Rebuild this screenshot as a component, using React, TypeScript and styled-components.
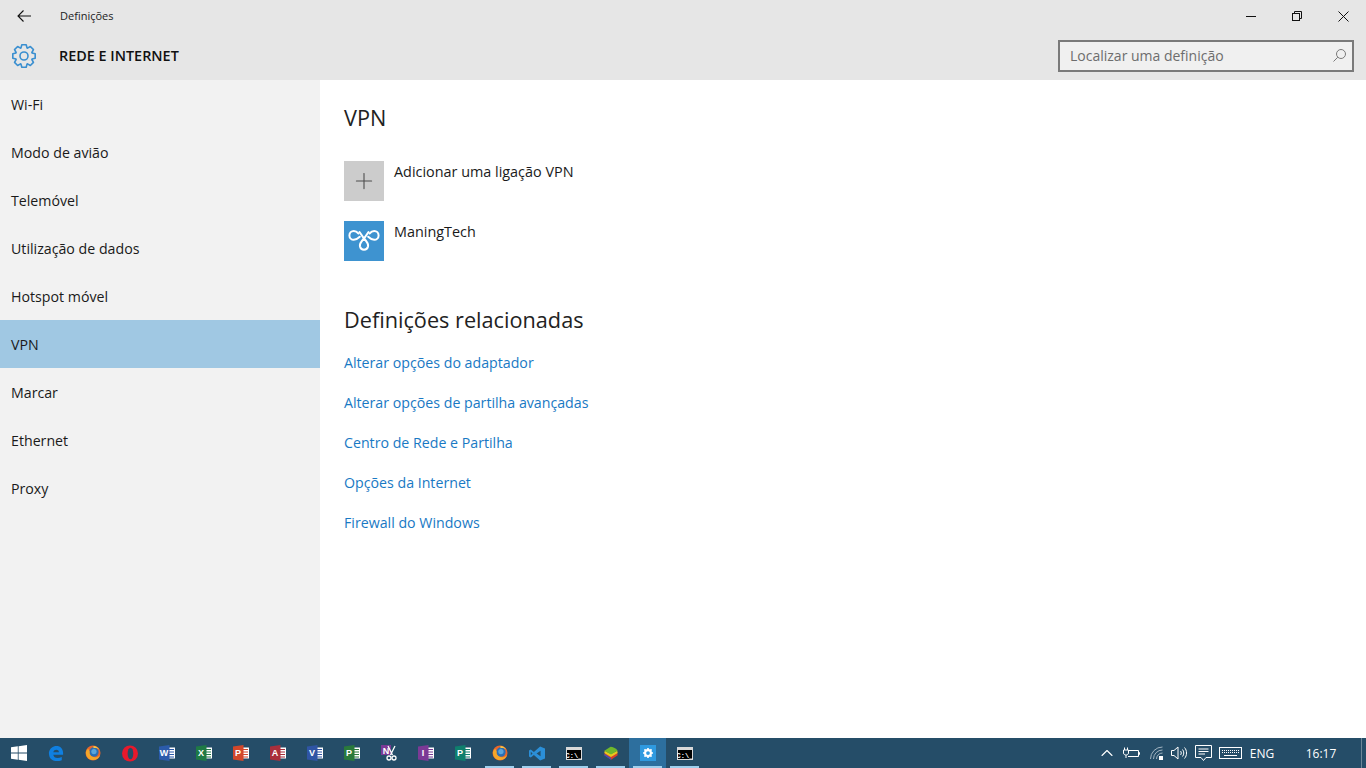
import React from 'react';
import styled, { createGlobalStyle } from 'styled-components';
import { ChevronUp, Plus } from 'lucide-react';

const GlobalStyle = createGlobalStyle`
  html, body {
    margin: 0;
    padding: 0;
    height: 100%;
    overflow: hidden;
    background: #fff;
    font-family: "Open Sans", "Noto Sans", "Liberation Sans", sans-serif;
    color: #000;
  }
  #root { height: 100%; }
`;

const Page = styled.div`
  width: 1366px;
  height: 768px;
  display: flex;
  flex-direction: column;
`;

const Header = styled.header`
  height: 80px;
  flex: none;
  background: #e6e6e6;
  display: flex;
  flex-direction: column;
`;

const TitleBar = styled.div`
  height: 32px;
  display: flex;
  align-items: center;
`;

const BackButton = styled.div`
  width: 48px;
  height: 32px;
  display: flex;
  align-items: center;
  justify-content: center;
`;

const TitleText = styled.span`
  margin-left: 12px;
  padding-bottom: 1px;
  font-size: 11px;
  line-height: 14px;
  color: #222;
  flex: 1;
`;

const WinButton = styled.div`
  width: 46px;
  height: 32px;
  display: flex;
  align-items: center;
  justify-content: center;
`;

const HeadRow = styled.div`
  flex: 1;
  display: flex;
  align-items: center;
  padding: 0 12px;
`;

const AppTitle = styled.h1`
  margin: 0 0 0 23px;
  font-size: 14.4px;
  font-weight: 600;
  flex: 1;
  line-height: 20px;
  color: #111;
`;

const SearchBox = styled.div`
  width: 296px;
  height: 32px;
  box-sizing: border-box;
  border: 2px solid #7a7a7a;
  background: #f0f0f0;
  display: flex;
  align-items: center;
  justify-content: space-between;
  padding: 0 5px 2px 10px;
  font-size: 14px;
  color: #6d6d6d;
`;

const Body = styled.div`
  flex: 1;
  display: flex;
  min-height: 0;
`;

const Sidebar = styled.nav`
  width: 320px;
  flex: none;
  background: #f2f2f2;
`;

const NavItem = styled.div<{ $active?: boolean }>`
  height: 48px;
  display: flex;
  align-items: center;
  padding-left: 11px;
  font-size: 14.2px;
  color: #1a1a1a;
  background: ${(p) => (p.$active ? '#a0c8e3' : 'transparent')};
`;

const Main = styled.main`
  flex: 1;
  background: #fff;
  padding: 23px 24px 0;
`;

const SectionTitle = styled.h2`
  margin: 0;
  font-size: 21.7px;
  font-weight: 400;
  line-height: 30px;
  color: #222;
`;

const Tiles = styled.div`
  margin-top: 28px;
  display: flex;
  flex-direction: column;
  gap: 20px;
`;

const TileRow = styled.div`
  display: flex;
  gap: 10px;
  height: 40px;
`;

const Tile = styled.div<{ $bg: string }>`
  width: 40px;
  height: 40px;
  background: ${(p) => p.$bg};
  display: flex;
  align-items: center;
  justify-content: center;
  color: #4c4c4c;
`;

const TileLabel = styled.span`
  padding-top: 1px;
  font-size: 14.4px;
  line-height: 20px;
  color: #1a1a1a;
`;

const Related = styled.div`
  margin-top: 44px;
`;

const Links = styled.div`
  margin-top: 7px;
  display: flex;
  flex-direction: column;
`;

const LinkItem = styled.a`
  height: 40px;
  display: flex;
  align-items: center;
  font-size: 14.2px;
  color: #1979c4;
`;

const Taskbar = styled.footer`
  height: 30px;
  flex: none;
  background: #254d68;
  display: flex;
  align-items: stretch;
`;

const Apps = styled.div`
  flex: 1;
  display: flex;
`;

const AppButton = styled.div<{ $open?: boolean; $active?: boolean }>`
  position: relative;
  width: 37px;
  display: flex;
  align-items: center;
  justify-content: center;
  background: ${(p) => (p.$active ? '#2d6f9e' : 'transparent')};
  &::after {
    content: '';
    display: ${(p) => (p.$open ? 'block' : 'none')};
    position: absolute;
    left: 4px;
    right: 4px;
    bottom: 0;
    height: 2px;
    background: #9fd0ee;
  }
`;

const OfficeLetter = styled.text`
  font-family: "Liberation Sans", sans-serif;
  font-size: 9px;
  font-weight: 700;
  fill: #fff;
`;

const CmdText = styled.text`
  font-family: "Liberation Mono", monospace;
  font-size: 7px;
  font-weight: 700;
  fill: #fff;
`;

const Tray = styled.div`
  display: flex;
  align-items: center;
  color: #fff;
  padding-right: 4px;
`;

const TrayIcon = styled.div<{ $w: number }>`
  width: ${(p) => p.$w}px;
  height: 30px;
  display: flex;
  align-items: center;
  justify-content: center;
`;

const TrayText = styled.span<{ $w: number }>`
  width: ${(p) => p.$w}px;
  font-size: 12px;
  text-align: center;
  color: #fff;
`;

const ShowDesktop = styled.div`
  width: 1px;
  height: 30px;
  background: #6c8798;
`;

function GearIcon() {
  const pt = (a: number, rad: number, deg: number) => {
    const t = ((a + deg) * Math.PI) / 180;
    return `${(12 + rad * Math.sin(t)).toFixed(2)} ${(12 - rad * Math.cos(t)).toFixed(2)}`;
  };
  const d = Array.from({ length: 8 }, (_, i) => i * 45)
    .map((a, i) => `${i === 0 ? 'M' : 'L'}${pt(a, 8.6, -21)} L${pt(a, 11.4, -11)} L${pt(a, 11.4, 11)} L${pt(a, 8.6, 21)}`)
    .join(' ');
  return (
    <svg width="24" height="24" viewBox="0 0 24 24" fill="none" stroke="#3a8fd0" strokeWidth="1.6" strokeLinejoin="round">
      <circle cx="12" cy="12" r="4" />
      <path d={d + ' Z'} />
    </svg>
  );
}

function BackArrow() {
  return (
    <svg width="14" height="12" viewBox="0 0 14 12" fill="none" stroke="#111" strokeWidth="1.1">
      <path d="M14 6H1M6.500 .5L1 6L6.500 11.500" />
    </svg>
  );
}

function MinimizeIcon() {
  return (
    <svg width="10" height="1" viewBox="0 0 10 1">
      <rect width="10" height="1" fill="#111" />
    </svg>
  );
}

function RestoreIcon() {
  return (
    <svg width="12" height="12" viewBox="0 0 12 12" fill="none" stroke="#111" strokeWidth="1">
      <rect x="1.500" y="3.500" width="7" height="7" />
      <path d="M3.500 3.500V1.500H10.500V8.500H8.500" />
    </svg>
  );
}

function CloseIcon() {
  return (
    <svg width="11" height="11" viewBox="0 0 11 11" fill="none" stroke="#111" strokeWidth="1">
      <path d="M.5 .5L10.500 10.500M10.500 .5L.5 10.500" />
    </svg>
  );
}

function SearchIcon() {
  return (
    <svg width="15" height="15" viewBox="0 0 15 15" fill="none" stroke="#7a7a7a" strokeWidth="1">
      <circle cx="9" cy="6" r="4.500" />
      <path d="M5.800 9.200L1.500 13.500" />
    </svg>
  );
}

function VpnKnot() {
  return (
    <svg width="40" height="40" viewBox="0 0 40 40" fill="none" stroke="#fff" strokeWidth="2" strokeLinecap="round">
      <path d="M14.500 12.500C13 10.800 11.500 10 9.800 10A4.400 4.400 0 0 0 9.800 18.800C12 18.800 14 17.500 15.800 15.800" />
      <path d="M25.500 12.500C27 10.800 28.500 10 30.200 10A4.400 4.400 0 0 1 30.200 18.800C28 18.800 26 17.500 24.200 15.800" />
      <path d="M15.500 11L20 17.500C23 20.500 24.500 23 24 25.500A4.100 4.100 0 0 1 16 25.500C15.500 23 17 20.500 20 17.500L24.500 11" />
    </svg>
  );
}

function WindowsLogo() {
  return (
    <svg width="16" height="16" viewBox="0 0 16 16" fill="#fff">
      <path d="M0 2.300L6.800 1.300V7.600H0Z" />
      <path d="M7.600 1.200L16 0V7.600H7.600Z" />
      <path d="M0 8.400H6.800V14.700L0 13.700Z" />
      <path d="M7.600 8.400H16V16L7.600 14.800Z" />
    </svg>
  );
}

function EdgeLogo() {
  return (
    <svg width="16" height="17" viewBox="0 0 18 18">
      <path
        fill="#0f7fe0"
        d="M1 8C2 3 5.500 .5 9.500 .5C14 .5 17 3.500 17 8.500V10.500H6C6.200 14 10.500 15.300 15.500 13V16.500C9 19 2 17 1.300 11C1.100 10 1 9 1 8ZM6 7.500H12.300C12.200 4 6.600 4 6 7.500Z"
      />
    </svg>
  );
}

function FirefoxLogo() {
  return (
    <svg width="16" height="16" viewBox="0 0 17 17">
      <circle cx="8.500" cy="8.500" r="8" fill="#e8662a" />
      <circle cx="9.500" cy="7.500" r="5" fill="#2a6fb5" />
      <circle cx="9.500" cy="7" r="2.800" fill="#5aa5dc" />
      <path fill="#f4a72a" d="M1 8C1 13 4.500 16 8.500 16C12 16 15 14 16 10.500C14 13 10.500 13.500 8 12.500C5.500 11.500 4.500 9.500 5 7L3.500 4C2 5 1 6.500 1 8Z" />
      <path fill="#f6c644" d="M9 1C11.500 1 14 2.500 15.300 5C13.500 3.200 11 2.800 9 3.500Z" />
    </svg>
  );
}

function OperaLogo() {
  return (
    <svg width="16" height="17" viewBox="0 0 17 18">
      <ellipse cx="8.500" cy="9" rx="8.500" ry="8.500" fill="#e8192c" />
      <ellipse cx="9" cy="9" rx="3" ry="6.200" fill="#254d68" />
    </svg>
  );
}

function OfficeIcon({ color, letter }: { color: string; letter: string }) {
  return (
    <svg width="16" height="16" viewBox="0 0 16 16">
      <path fill="#fff" d="M8 2.500H16V13.500H8Z" />
      <path fill={color} d="M9 4H15V5H9ZM9 6.500H15V7.500H9ZM9 9H15V10H9ZM9 11.500H15V12.500H9Z" />
      <path fill={color} d="M0 1.500L10.500 0V16L0 14.500Z" />
      <OfficeLetter x="5" y="11" textAnchor="middle">{letter}</OfficeLetter>
    </svg>
  );
}

function OneNoteIcon() {
  return (
    <svg width="16" height="16" viewBox="0 0 16 16">
      <path fill="#7b3a96" d="M0 0H10V10H0Z" />
      <OfficeLetter x="5" y="8.500" textAnchor="middle">N</OfficeLetter>
      <g fill="none" stroke="#fff" strokeWidth="1.300">
        <path d="M7 1L11.500 10M14 1L9.500 10" />
        <circle cx="8" cy="13" r="2" />
        <circle cx="13" cy="13" r="2" />
      </g>
    </svg>
  );
}

function VsCodeLogo() {
  return (
    <svg width="16" height="15" viewBox="0 0 18 16">
      <path fill="#2b8fd8" d="M12.500 0L18 2.300V13.700L12.500 16L5.500 9.800L2 12.500L0 11.300V4.700L2 3.500L5.500 6.200ZM13 4.800L8.500 8L13 11.200ZM2 6V10L4 8Z" />
    </svg>
  );
}

function CmdIcon() {
  return (
    <svg width="16" height="13" viewBox="0 0 16 13">
      <rect width="16" height="13" fill="#d9d9d9" />
      <rect x="1" y="3" width="14" height="9" fill="#000" />
      <CmdText x="8" y="10.500" textAnchor="middle">C:\_</CmdText>
    </svg>
  );
}

function BlueStacksIcon() {
  return (
    <svg width="16" height="15" viewBox="0 0 18 16">
      <path fill="#d6402b" d="M2 7L9 10.500L16 7L16.500 10L9 15L1.500 10Z" />
      <path fill="#3a4fc0" d="M1.500 10L9 15V13L2 8.500Z" />
      <path fill="#e8c81e" d="M2 5L9 8.500L16 5L16.500 7.500L9 12L1.500 7.500Z" />
      <path fill="#6fb82c" d="M1.500 5L8.500 .5C11 .5 14 2 16.500 4.500L9 9Z" />
    </svg>
  );
}

function SettingsTile() {
  return (
    <svg width="16" height="16" viewBox="0 0 16 16">
      <rect width="16" height="16" fill="#2f9ae0" />
      <g transform="translate(3 3) scale(.417)">
        <circle cx="12" cy="12" r="7" fill="none" stroke="#fff" strokeWidth="5" />
        <path stroke="#fff" strokeWidth="4" d="M12 0V5M12 19V24M0 12H5M19 12H24M3.500 3.500L7 7M17 17L20.500 20.500M3.500 20.500L7 17M17 7L20.500 3.500" />
      </g>
    </svg>
  );
}

function PlugIcon() {
  return (
    <svg width="17" height="12" viewBox="0 0 17 12" fill="none" stroke="#fff" strokeWidth="1">
      <path d="M5 3.500H15.500V9.500H5M15.500 5.500H16.500V7.500H15.500" />
      <path d="M1.500 .5V3M4.500 .5V3M.5 3H5.500V6C5.500 7.500 4 8 3 8C2 8 .5 7.500 .5 6ZM3 8V11" />
    </svg>
  );
}

function WifiIcon() {
  return (
    <svg width="16" height="14" viewBox="0 0 16 14" fill="none" stroke="#a3b5c2" strokeWidth="1">
      <path d="M2.500 13A12 12 0 0 1 14.500 1M5.500 13A9 9 0 0 1 14.500 4M8.500 13A6 6 0 0 1 14.500 7" />
      <rect x="11" y="10" width="4" height="4" fill="#fff" stroke="none" />
    </svg>
  );
}

function SpeakerIcon() {
  return (
    <svg width="17" height="14" viewBox="0 0 17 14" fill="none" stroke="#fff" strokeWidth="1">
      <path d="M.5 4.500H3L7 1V13L3 9.500H.5Z" />
      <path d="M9.500 5C10.500 6 10.500 8 9.500 9M11.500 3.500C13.200 5.500 13.200 8.500 11.500 10.500M13.500 1.500C16.200 4.500 16.200 9.500 13.500 12.500" />
    </svg>
  );
}

function NotifyIcon() {
  return (
    <svg width="17" height="17" viewBox="0 0 17 17" fill="none" stroke="#fff" strokeWidth="1">
      <path d="M.5 .5H16.500V12.500H11L8.500 15.500L6 12.500H.5Z" />
      <path d="M3.500 4H13.500M3.500 6.500H13.500M3.500 9H10" />
    </svg>
  );
}

function KeyboardIcon() {
  return (
    <svg width="23" height="12" viewBox="0 0 23 12" fill="none" stroke="#fff" strokeWidth="1">
      <rect x=".5" y=".5" width="22" height="11" />
      <path d="M3 3.500H20M3 5.500H20" strokeDasharray="1 1" />
      <path d="M5 8.500H18" />
    </svg>
  );
}

const NAV = ['Wi-Fi', 'Modo de avião', 'Telemóvel', 'Utilização de dados', 'Hotspot móvel', 'VPN', 'Marcar', 'Ethernet', 'Proxy'];

const LINKS = [
  'Alterar opções do adaptador',
  'Alterar opções de partilha avançadas',
  'Centro de Rede e Partilha',
  'Opções da Internet',
  'Firewall do Windows',
];

export default function App() {
  return (
    <Page>
      <GlobalStyle />
      <Header>
        <TitleBar>
          <BackButton><BackArrow /></BackButton>
          <TitleText>Definições</TitleText>
          <WinButton><MinimizeIcon /></WinButton>
          <WinButton><RestoreIcon /></WinButton>
          <WinButton><CloseIcon /></WinButton>
        </TitleBar>
        <HeadRow>
          <GearIcon />
          <AppTitle>REDE E INTERNET</AppTitle>
          <SearchBox>
            Localizar uma definição
            <SearchIcon />
          </SearchBox>
        </HeadRow>
      </Header>
      <Body>
        <Sidebar>
          {NAV.map((n) => (
            <NavItem key={n} $active={n === 'VPN'}>{n}</NavItem>
          ))}
        </Sidebar>
        <Main>
          <SectionTitle>VPN</SectionTitle>
          <Tiles>
            <TileRow>
              <Tile $bg="#cccccc"><Plus size={26} strokeWidth={1} /></Tile>
              <TileLabel>Adicionar uma ligação VPN</TileLabel>
            </TileRow>
            <TileRow>
              <Tile $bg="#3e93d0"><VpnKnot /></Tile>
              <TileLabel>ManingTech</TileLabel>
            </TileRow>
          </Tiles>
          <Related>
            <SectionTitle>Definições relacionadas</SectionTitle>
            <Links>
              {LINKS.map((l) => (
                <LinkItem key={l}>{l}</LinkItem>
              ))}
            </Links>
          </Related>
        </Main>
      </Body>
      <Taskbar>
        <Apps>
          <AppButton><WindowsLogo /></AppButton>
          <AppButton><EdgeLogo /></AppButton>
          <AppButton><FirefoxLogo /></AppButton>
          <AppButton><OperaLogo /></AppButton>
          <AppButton><OfficeIcon color="#2b5bab" letter="W" /></AppButton>
          <AppButton><OfficeIcon color="#1f7a45" letter="X" /></AppButton>
          <AppButton><OfficeIcon color="#d2472a" letter="P" /></AppButton>
          <AppButton><OfficeIcon color="#a92f3c" letter="A" /></AppButton>
          <AppButton><OfficeIcon color="#2f55a5" letter="V" /></AppButton>
          <AppButton><OfficeIcon color="#2a7a3c" letter="P" /></AppButton>
          <AppButton><OneNoteIcon /></AppButton>
          <AppButton><OfficeIcon color="#7b3a96" letter="I" /></AppButton>
          <AppButton><OfficeIcon color="#0f7f6d" letter="P" /></AppButton>
          <AppButton $open><FirefoxLogo /></AppButton>
          <AppButton $open><VsCodeLogo /></AppButton>
          <AppButton $open><CmdIcon /></AppButton>
          <AppButton $open><BlueStacksIcon /></AppButton>
          <AppButton $open $active><SettingsTile /></AppButton>
          <AppButton $open><CmdIcon /></AppButton>
        </Apps>
        <Tray>
          <TrayIcon $w={24}><ChevronUp size={20} strokeWidth={1.3} /></TrayIcon>
          <TrayIcon $w={24}><PlugIcon /></TrayIcon>
          <TrayIcon $w={26}><WifiIcon /></TrayIcon>
          <TrayIcon $w={20}><SpeakerIcon /></TrayIcon>
          <TrayIcon $w={28}><NotifyIcon /></TrayIcon>
          <TrayIcon $w={26}><KeyboardIcon /></TrayIcon>
          <TrayText $w={38}>ENG</TrayText>
          <TrayText $w={80}>16:17</TrayText>
          <ShowDesktop />
        </Tray>
      </Taskbar>
    </Page>
  );
}
